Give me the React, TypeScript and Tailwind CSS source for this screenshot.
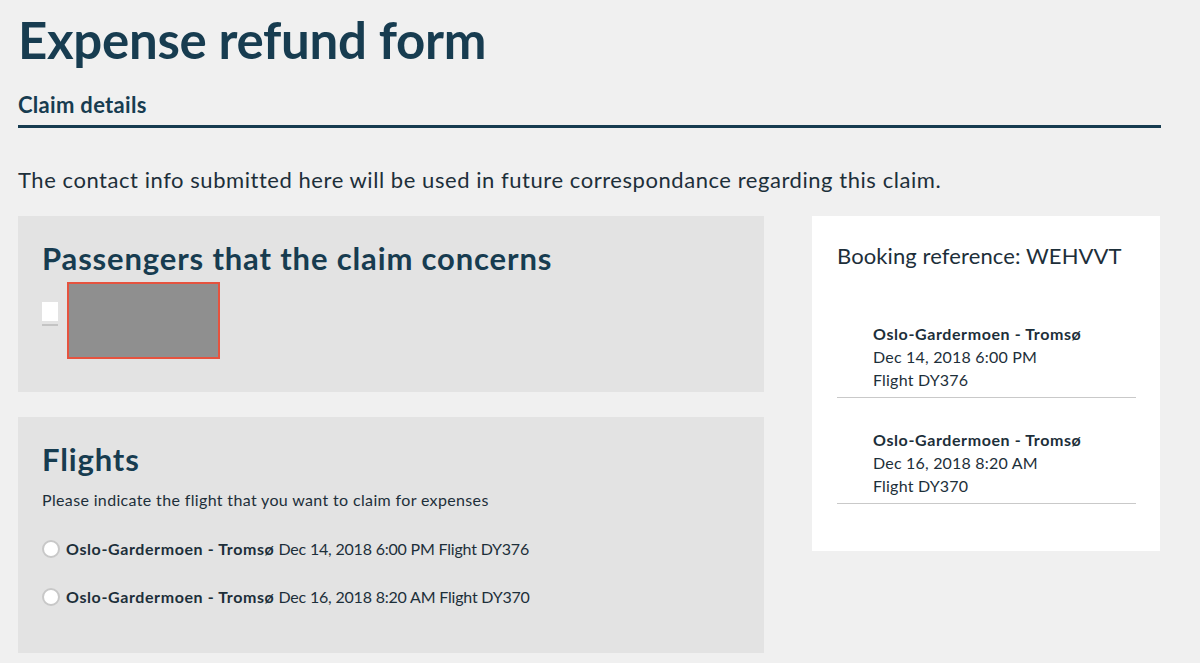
import { ReactNode } from 'react';

const flights = [
  { route: 'Oslo-Gardermoen - Tromsø', time: 'Dec 14, 2018 6:00 PM', number: 'Flight DY376' },
  { route: 'Oslo-Gardermoen - Tromsø', time: 'Dec 16, 2018 8:20 AM', number: 'Flight DY370' },
];

function Card({ children, className }: { children: ReactNode; className?: string }) {
  return <section className={`bg-[#e3e3e3] px-6 ${className ?? ''}`}>{children}</section>;
}

export default function App() {
  return (
    <div
      className="min-h-[663px] bg-[#f0f0f0] text-[#173c50] px-[18px] overflow-hidden"
      style={{ fontFamily: 'Lato, "Open Sans", sans-serif' }}
    >
      <h1 className="text-[51px] font-bold leading-none pt-[14px] tracking-[-0.3px]">Expense refund form</h1>

      <div className="w-[1143px] border-b-[3px] border-[#173c50] mt-[25px] pb-[5px]">
        <h2 className="text-[22px] font-bold leading-[30px] tracking-[0.3px]">Claim details</h2>
      </div>

      <p className="text-[22px] leading-[30px] mt-[37px] text-[#1d2f3a] tracking-[0.55px]">
        The contact info submitted here will be used in future correspondance regarding this claim.
      </p>

      <div className="flex gap-[48px] mt-[21px]">
        <div className="w-[746px] flex flex-col gap-[25px]">
          <Card className="h-[176px] pt-[24px]">
            <h3 className="text-[31px] font-bold leading-[36px] tracking-[0.85px]">Passengers that the claim concerns</h3>
            <div className="flex items-start gap-[9px] mt-[6px]">
              <div className="mt-[20px] flex flex-col gap-[3px]">
                <span className="block w-[16px] h-[19px] bg-white" />
                <span className="block w-[16px] h-[2px] bg-[#c4c4c4]" />
              </div>
              <div className="w-[153px] h-[77px] bg-[#8f8f8f] border-2 border-[#e6533f]" />
            </div>
          </Card>

          <Card className="h-[236px] pt-[24px]">
            <h3 className="text-[31px] font-bold leading-[36px] tracking-[0.85px]">Flights</h3>
            <p className="text-[16px] leading-[20px] mt-[13px] text-[#1d2f3a] tracking-[0.35px]">
              Please indicate the flight that you want to claim for expenses
            </p>
            <div className="flex flex-col gap-[26px] mt-[28px]">
              {flights.map((f) => (
                <label key={f.number} className="flex items-center gap-[6px] text-[16px] leading-[22px] text-[#1d2f3a]">
                  <span className="w-[18px] h-[18px] rounded-full bg-white border-2 border-[#c8c8c8] shrink-0" />
                  <span>
                    <b className="font-bold tracking-[0.6px]">{f.route}</b>{' '}
                    <span className="tracking-[-0.2px]">
                      {f.time} {f.number}
                    </span>
                  </span>
                </label>
              ))}
            </div>
          </Card>
        </div>

        <aside className="w-[348px] h-[335px] bg-white px-[25px] pt-[25px]">
          <h3 className="text-[22px] leading-[30px] text-[#1d2f3a] tracking-[0.1px]">Booking reference: WEHVVT</h3>
          <div className="mt-[51px] w-[299px] flex flex-col gap-[30px]">
            {flights.map((f) => (
              <div key={f.number} className="border-b border-[#c9c9c9] pl-[36px] pb-[6px] text-[16px] leading-[23px] text-[#1d2f3a]">
                <div className="font-bold tracking-[0.6px]">{f.route}</div>
                <div className="tracking-[0.2px]">{f.time}</div>
                <div className="tracking-[0.2px]">{f.number}</div>
              </div>
            ))}
          </div>
        </aside>
      </div>
    </div>
  );
}
